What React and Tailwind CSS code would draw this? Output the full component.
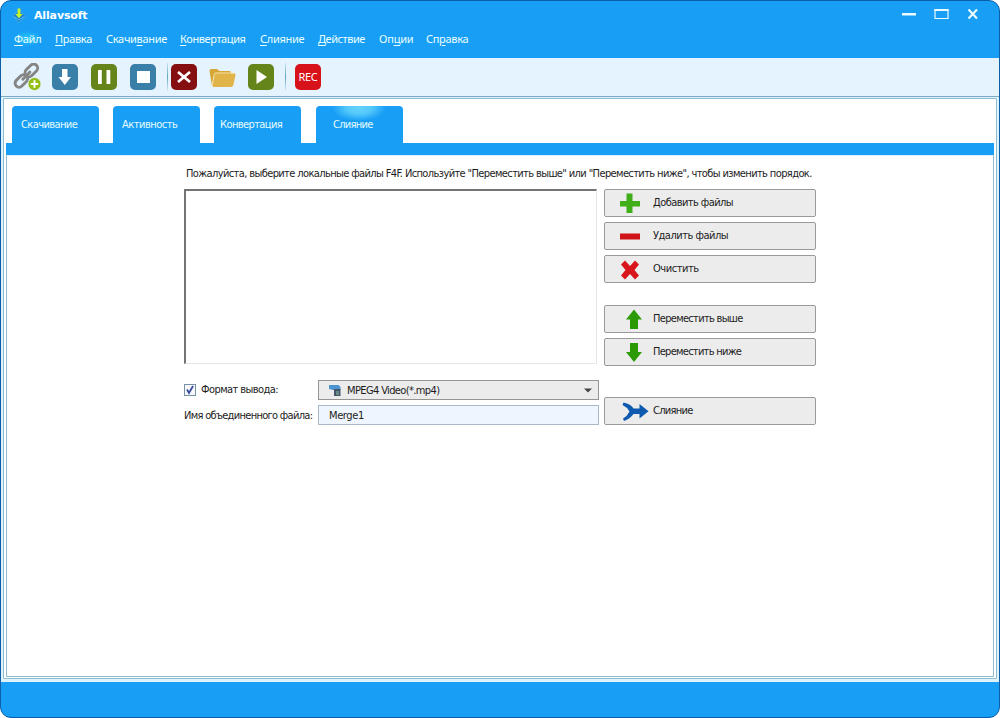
import React from "react";

const menus = [
  { pre: "", key: "Ф", post: "айл", box: "w-[41px]", text: "tracking-[-0.25px]", hot: true },
  { pre: "", key: "П", post: "равка", box: "w-[51px]", text: "tracking-[-0.3px]" },
  { pre: "Скачи", key: "в", post: "ание", box: "w-[74px]", text: "tracking-[-0.3px]" },
  { pre: "", key: "К", post: "онвертация", box: "w-[80px]", text: "tracking-[-0.4px]" },
  { pre: "", key: "С", post: "лияние", box: "w-[58px]", text: "tracking-[-0.3px]" },
  { pre: "", key: "Д", post: "ействие", box: "w-[61px]", text: "tracking-[-0.45px]" },
  { pre: "Оп", key: "ц", post: "ии", box: "w-[47px]", text: "tracking-[-0.2px]" },
  { pre: "Сп", key: "р", post: "авка", box: "w-[60px]", text: "tracking-[-0.3px]" },
];

const tabs = [
  { label: "Скачивание", cls: "w-[87px] pl-[9px] tracking-[-0.6px]" },
  { label: "Активность", cls: "w-[87px] ml-[14px] pl-[9px] tracking-[-0.5px]" },
  { label: "Конвертация", cls: "w-[87px] ml-[14px] pl-[6px] tracking-[-0.6px]" },
  { label: "Слияние", cls: "w-[87px] ml-[15px] pl-[17px] tracking-[-0.7px]", active: true },
];

function AppLogo() {
  return (
    <svg width="14" height="16" viewBox="0 0 14 16" className="ml-[11px] mt-[6px] shrink-0">
      <path d="M7 3 13.500 9 7 15.500.5 9Z" fill="#1b7fd0" stroke="#4fb6ee" strokeWidth=".8" />
      <path d="M2 9.500 7 13l5-3.500" fill="none" stroke="#6cc4f0" strokeWidth=".8" />
      <path d="M5.600 1.500h2.800v5.500h2.300L7 11.300 3.300 7h2.300Z" fill="#c5f52b" />
    </svg>
  );
}

function LinkIcon() {
  return (
    <svg width="28" height="28" viewBox="0 0 28 28" fill="none">
      <g transform="rotate(-45 13 13)" stroke="#858585" strokeWidth="2.9">
        <rect x="-1" y="9.2" width="14.5" height="8" rx="4" />
        <rect x="13.5" y="8.8" width="14.5" height="8" rx="4" />
        <path d="M8.5 13h10" strokeLinecap="round" />
      </g>
      <circle cx="21.500" cy="21" r="6.500" fill="#93bd12" stroke="#e5f3fe" strokeWidth=".8" />
      <path d="M21.500 17.200v7.600M17.700 21h7.600" stroke="#fff" strokeWidth="2" />
    </svg>
  );
}

function FolderIcon() {
  return (
    <svg width="27" height="20" viewBox="0 0 27 20">
      <path d="M.5 3Q.5 1 2.500 1h5.500l2.500 2H20.500q1.500 0 1.500 2v2H7L3 18Z" fill="#d7a735" />
      <path d="M6.500 5.500H25.500q1.300 0 1 1.500L24.500 16.500Q24 19 22 19H5Q3.300 19 3.600 17.500L5.500 7Q5.800 5.500 6.500 5.500Z" fill="#e1b44a" />
      <path d="M3.200 17 5.300 6Q5.500 5 6.800 5H25.500" fill="none" stroke="#f6e4ae" strokeWidth="1" />
    </svg>
  );
}

function ToolButton({ cls, children }) {
  return (
    <div className={`w-[26px] h-[26px] rounded-[5px] shrink-0 flex items-center justify-center ${cls}`}>
      {children}
    </div>
  );
}

function Separator({ cls }) {
  return <div className={`w-px h-[28px] shrink-0 bg-gradient-to-b from-[#c4e2f0] via-[#5fa6bd] to-[#d4eaf5] ${cls}`} />;
}

function ActionButton({ icon, label, cls = "", text = "" }) {
  return (
    <button className={`w-[212px] h-[28px] shrink-0 flex items-center rounded-[2px] border border-[#9a9a9a] bg-[#ececec] text-left ${cls}`}>
      <span className="w-[48px] h-[24px] shrink-0 block">{icon}</span>
      <span className={`whitespace-nowrap ${text}`}>{label}</span>
    </button>
  );
}

const plus = (
  <svg width="48" height="24" viewBox="0 0 48 24"><path d="M21.500 2.500h6V10H35v5.500h-7.500V22h-6v-6.500H15V10h6.500Z" fill="#3fae19" /></svg>
);
const minus = (
  <svg width="48" height="24" viewBox="0 0 48 24"><path d="M15 9.500h20v6H15Z" fill="#cf1319" /></svg>
);
const cross = (
  <svg width="48" height="24" viewBox="0 0 48 24"><path d="M20 3.500 25 9l5-5.500L34 7.500 29.500 13l4.500 5.500-4 4-5-5.500-5 5.500-4-4 4.500-5.500L16 7.500Z" fill="#d9161b" /></svg>
);
const up = (
  <svg width="48" height="24" viewBox="0 0 48 24"><path d="M29 2.500 37 12.500h-4V22h-8v-9.500h-4Z" fill="#2c9a04" /></svg>
);
const down = (
  <svg width="48" height="24" viewBox="0 0 48 24"><path d="M29 22 37 12h-4V3h-8v9h-4Z" fill="#2c9a04" /></svg>
);
const merge = (
  <svg width="48" height="24" viewBox="0 0 48 24"><path d="M18.500 3.500Q26 5 28.500 9.500H34.500V5L43.500 12.300 34.500 19.500V15H28.500Q25 20 19 22L18 19.500Q22.500 17 24.500 12.500 22 8 17.500 6Z" fill="#0e5aae" /></svg>
);

export default function App() {
  return (
    <div className="w-[1000px] h-[718px] overflow-hidden bg-white font-['DejaVu_Sans_Condensed','DejaVu_Sans',sans-serif] text-[11px] leading-[14px] text-[#1c1c1c]">
      <div className="w-full h-full flex flex-col rounded-[11px] border border-[#0b5fa8] bg-[#189ef5] overflow-hidden">
        <header className="h-[57px] shrink-0 text-white">
          <div className="h-[26px] flex items-start">
            <AppLogo />
            <div className="ml-[8px] mt-[7px] font-bold text-[11px] leading-[16px] font-['DejaVu_Sans',sans-serif] tracking-[-0.15px]">Allavsoft</div>
            <div className="flex-1" />
            <svg width="80" height="14" viewBox="0 0 80 14" className="mt-[6px] mr-[18px]" fill="none" stroke="#e9fbff">
              <path d="M1 7.300h14" strokeWidth="2.600" />
              <path d="M34 2.500h13v9h-13Z" strokeWidth="1.200" />
              <path d="M33.500 3h14" strokeWidth="2" />
              <path d="M67.500 2.500 76 11.500M76 2.500 67.500 11.500" strokeWidth="2.200" />
            </svg>
          </div>
          <nav className="flex pl-[14px] pt-[4px] font-['Noto_Sans',sans-serif] text-[11px] leading-[16px] text-[#eaffff]">
            {menus.map((m) => (
              <div key={m.post + m.key} className={`shrink-0 whitespace-nowrap -indent-px ${m.box}`}>
                <span className={`${m.text} ${m.hot ? "bg-[radial-gradient(ellipse_at_center,#27c8fb_0%,#18a6f600_75%)]" : ""}`}>
                  {m.pre}
                  <span className="underline underline-offset-2">{m.key}</span>
                  {m.post}
                </span>
              </div>
            ))}
          </nav>
        </header>

        <div className="h-[38px] shrink-0 flex items-center bg-[#e5f3fe] pl-[12px]">
          <div className="w-[28px] shrink-0"><LinkIcon /></div>
          <ToolButton cls="ml-[11px] bg-[#397fa8]">
            <svg width="16" height="18" viewBox="0 0 16 18"><path d="M5 1h5.500v8H14l-6.200 8L1.500 9H5Z" fill="#fff" /></svg>
          </ToolButton>
          <ToolButton cls="ml-[13px] bg-[#65851b]">
            <svg width="14" height="14" viewBox="0 0 14 14"><path d="M1 0h3.800v14H1ZM9.500 0h3.800v14H9.500Z" fill="#fff" /></svg>
          </ToolButton>
          <ToolButton cls="ml-[13px] bg-[#397fa8]">
            <div className="w-[13px] h-[12px] bg-white" />
          </ToolButton>
          <Separator cls="ml-[11px]" />
          <ToolButton cls="ml-[3px] bg-[#850e10]">
            <svg width="14" height="12" viewBox="0 0 14 12"><path d="m1 1 12 10M13 1 1 11" stroke="#fff" strokeWidth="2.700" /></svg>
          </ToolButton>
          <div className="ml-[12px] mt-[2px] w-[27px] shrink-0"><FolderIcon /></div>
          <ToolButton cls="ml-[12px] bg-[#65851b]">
            <svg width="12" height="16" viewBox="0 0 12 16"><path d="M1.500 1 12 8 1.500 15Z" fill="#fff" /></svg>
          </ToolButton>
          <Separator cls="ml-[11px]" />
          <ToolButton cls="ml-[9px] bg-[#d8121a]">
            <span className="text-white text-[11px] leading-[12px] font-['Noto_Sans',sans-serif] tracking-[-0.3px]">REC</span>
          </ToolButton>
        </div>

        <main className="h-[586px] shrink-0 bg-[#dff3fc] border-t border-[#7fa9c6] px-[2px] pt-[1px] pb-[3px]">
          <div className="h-full bg-white border border-[#8dbdd0] rounded-[1px] px-[2px] pb-[1px] flex flex-col">
            <div className="h-[44px] shrink-0 flex items-end pl-[6px]">
              {tabs.map((t) => (
                <div
                  key={t.label}
                  className={`h-[37px] shrink-0 rounded-t-[4px] pt-[12px] text-[#e6fbff] whitespace-nowrap ${t.cls} ${
                    t.active
                      ? "bg-[radial-gradient(ellipse_27px_13px_at_43px_2px,#66d2fc_0%,#55c9fb_45%,#189ef5_100%)]"
                      : "bg-[#189ef5]"
                  }`}
                >
                  {t.label}
                </div>
              ))}
            </div>
            <div className="h-[12px] shrink-0 bg-[#189ef5]" />
            <section className="flex-1 border border-t-[#d8eef8] border-[#92bfce] pl-[177px] pt-[11px]">
              <p className="pl-[2px] h-[22px] whitespace-nowrap tracking-[-0.615px]">
                Пожалуйста, выберите локальные файлы F4F. Используйте "Переместить выше" или "Переместить ниже", чтобы изменить порядок.
              </p>
              <div className="flex">
                <div className="w-[415px] mr-[5px] shrink-0">
                  <div className="w-[413px] h-[175px] bg-white border border-l-2 border-t-2 border-t-[#747474] border-l-[#747474] border-r-[#e6e6e6] border-b-[#e6e6e6]" />
                  <div className="mt-[16px] h-[20px] flex items-center">
                    <span className="w-[12px] h-[12px] border border-[#7891a4] bg-[#f6f8fc] shrink-0 flex">
                      <svg width="10" height="10" viewBox="0 0 10 10"><path d="m2 4.500 2 3.500 4-7" fill="none" stroke="#3c4d9b" strokeWidth="1.800" /></svg>
                    </span>
                    <span className="w-[122px] pl-[5px] whitespace-nowrap tracking-[-0.57px]">Формат вывода:</span>
                    <div className="w-[281px] h-[20px] shrink-0 bg-[#ececec] border border-[#949494] flex items-center pl-[10px] pr-[6px]">
                      <svg width="12" height="11" viewBox="0 0 12 11">
                        <path d="M0 0h9.500l2 2v3H4L0 4Z" fill="#4b94d0" />
                        <path d="M5 4h6.500v7H5Z" fill="#46566a" />
                        <path d="M7 6h3v4H7Z" fill="#668b87" />
                      </svg>
                      <span className="pl-[6px] flex-1 whitespace-nowrap tracking-[-0.62px] pt-px">MPEG4 Video(*.mp4)</span>
                      <svg width="8" height="5" viewBox="0 0 8 5"><path d="M0 .5h8L4 4.500Z" fill="#444" /></svg>
                    </div>
                  </div>
                  <div className="mt-[5px] h-[20px] flex items-center">
                    <span className="w-[134px] shrink-0 whitespace-nowrap pt-px tracking-[-0.7px]">Имя объединенного файла:</span>
                    <div className="w-[281px] h-[20px] shrink-0 bg-[#eef5fe] border border-[#a9b8c6] flex items-center pl-[10px] pt-px tracking-[-0.4px]">Merge1</div>
                  </div>
                </div>
                <div className="flex flex-col">
                  <ActionButton icon={plus} label="Добавить файлы" text="tracking-[-0.57px]" />
                  <ActionButton icon={minus} label="Удалить файлы" cls="mt-[5px]" text="tracking-[-0.5px]" />
                  <ActionButton icon={cross} label="Очистить" cls="mt-[5px]" text="tracking-[-0.45px]" />
                  <ActionButton icon={up} label="Переместить выше" cls="mt-[22px]" text="tracking-[-0.69px]" />
                  <ActionButton icon={down} label="Переместить ниже" cls="mt-[5px]" text="tracking-[-0.72px]" />
                  <ActionButton icon={merge} label="Слияние" cls="mt-[31px]" text="tracking-[-0.7px]" />
                </div>
              </div>
            </section>
          </div>
        </main>
      </div>
    </div>
  );
}
